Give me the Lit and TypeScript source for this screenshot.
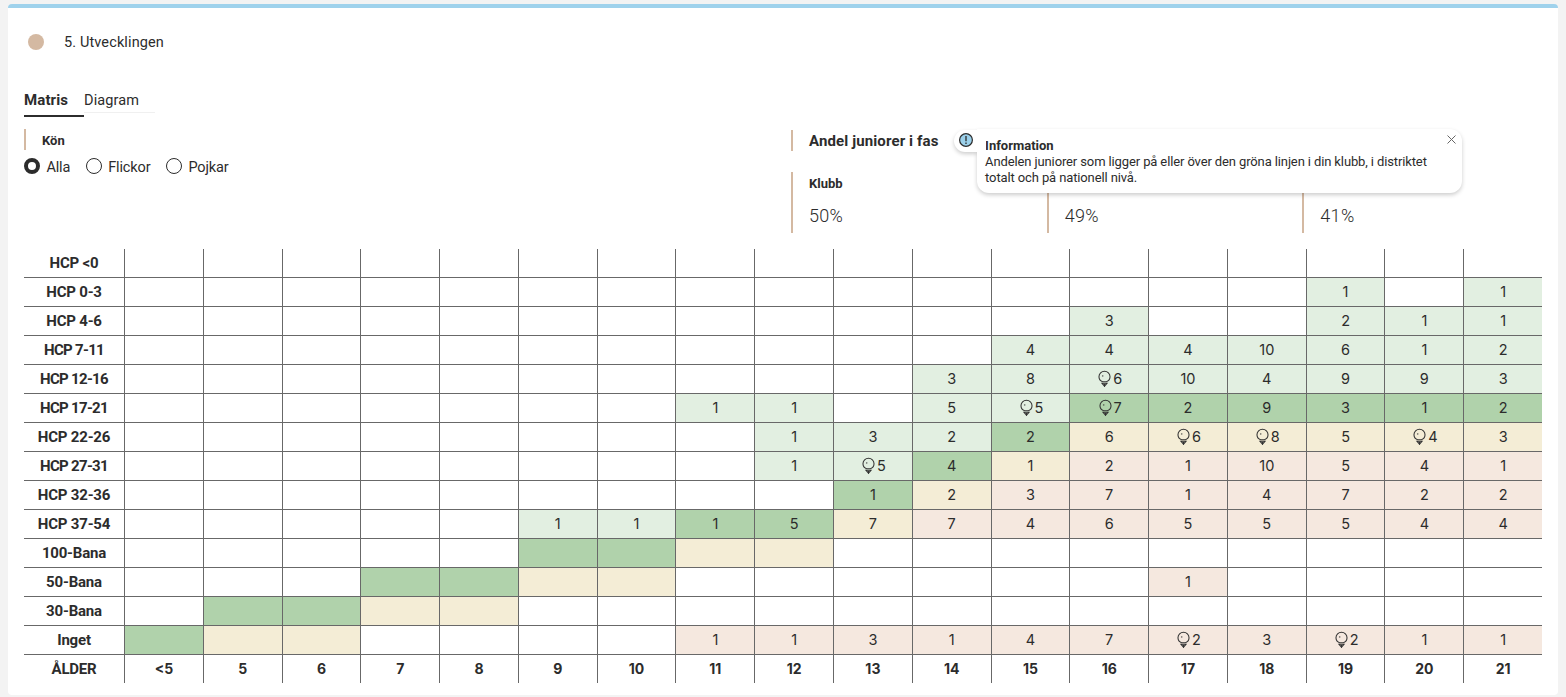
import { LitElement, html, svg, css, nothing } from 'lit';
import { customElement, property, state } from 'lit/decorators.js';
import { classMap } from 'lit/directives/class-map.js';

interface Cell {
  tone: string;
  value: string;
  bulb: boolean;
}

const AGES = ['<5', '5', '6', '7', '8', '9', '10', '11', '12', '13', '14', '15', '16', '17', '18', '19', '20', '21'];

const TONES: Record<string, string> = {
  l: 'above',
  g: 'line',
  y: 'near',
  r: 'below',
};

// label, index of the first filled age column, cells ("*" marks a light bulb)
const ROWS: [string, number, string][] = [
  ['HCP <0', 0, ''],
  ['HCP 0-3', 15, 'l1 . l1'],
  ['HCP 4-6', 12, 'l3 . . l2 l1 l1'],
  ['HCP 7-11', 11, 'l4 l4 l4 l10 l6 l1 l2'],
  ['HCP 12-16', 10, 'l3 l8 l6* l10 l4 l9 l9 l3'],
  ['HCP 17-21', 7, 'l1 l1 . l5 l5* g7* g2 g9 g3 g1 g2'],
  ['HCP 22-26', 8, 'l1 l3 l2 g2 y6 y6* y8* y5 y4* y3'],
  ['HCP 27-31', 8, 'l1 l5* g4 y1 r2 r1 r10 r5 r4 r1'],
  ['HCP 32-36', 9, 'g1 y2 r3 r7 r1 r4 r7 r2 r2'],
  ['HCP 37-54', 5, 'l1 l1 g1 g5 y7 r7 r4 r6 r5 r5 r5 r4 r4'],
  ['100-Bana', 5, 'g g y y'],
  ['50-Bana', 3, 'g g y y . . . . . . r1'],
  ['30-Bana', 1, 'g g y y'],
  ['Inget', 0, 'g y y . . . . r1 r1 r3 r1 r4 r7 r2* r3 r2* r1 r1'],
];

function parseRow(start: number, source: string): Cell[] {
  const tokens = source.split(' ');
  return AGES.map((_, i) => {
    const token = tokens[i - start] || '.';
    return {
      tone: TONES[token[0]] || '',
      value: token.slice(1).replace('*', ''),
      bulb: token.endsWith('*'),
    };
  });
}

@customElement('junior-matrix')
export class JuniorMatrix extends LitElement {
  static styles = css`
    :host {
      display: block;
    }
    .row {
      display: grid;
      grid-template-columns: 100px repeat(18, 1fr);
      height: 28px;
      border-bottom: 1px solid #686868;
    }
    .row.ages {
      border-bottom: none;
    }
    .label,
    .cell {
      display: flex;
      align-items: center;
      justify-content: center;
      box-sizing: border-box;
      min-width: 0;
      padding-bottom: 1px;
      white-space: nowrap;
    }
    .label {
      font-weight: 700;
      font-size: 15px;
      letter-spacing: -0.2px;
    }
    /* labels with a "1" in them set tighter */
    .label.tight {
      letter-spacing: -0.7px;
    }
    .cell {
      border-left: 1px solid #686868;
      font-family: Inter, sans-serif;
      font-size: 14.5px;
      font-weight: 400;
      gap: 2px;
      padding-bottom: 2px;
    }
    .cell.hint {
      padding-left: 2px;
    }
    .ages .cell {
      font-weight: 700;
      font-size: 14px;
    }
    .above {
      background: #e2efe1;
    }
    .line {
      background: #b0d2ab;
    }
    .near {
      background: #f4edd6;
    }
    .below {
      background: #f5e8df;
    }
    .bulb {
      width: 13px;
      height: 17px;
      flex: none;
    }
  `;

  renderBulb() {
    return svg`
      <svg class="bulb" viewBox="0 0 12 16" fill="none" stroke="#333" stroke-width="1">
        <path d="M4.2 11C2.1 10.3.8 8.6.8 6.4a5.2 5.2 0 0 1 10.4 0c0 2.2-1.3 3.9-3.4 4.6z" />
        <path d="M3.6 12.4h4.8L6 15.2z" />
        <path d="M6 13v2.8" />
        <path d="M3.6 5.6h1.4M4.3 4.9v1.4" stroke-width=".5" />
      </svg>
    `;
  }

  render() {
    return html`
      ${ROWS.map(
        ([label, start, source]) => html`
          <div class="row">
            <div class=${classMap({ label: true, tight: /^HCP.*(1\d|-\d1)/.test(label) })}>${label}</div>
            ${parseRow(start, source).map(
              (cell) => html`
                <div class="cell ${cell.tone} ${cell.bulb ? 'hint' : ''}">${cell.bulb ? this.renderBulb() : nothing}<span>${cell.value}</span></div>
              `
            )}
          </div>
        `
      )}
      <div class="row ages">
        <div class="label">ÅLDER</div>
        ${AGES.map((age) => html`<div class="cell">${age}</div>`)}
      </div>
    `;
  }
}

@customElement('info-popover')
export class InfoPopover extends LitElement {
  @property({ type: String }) heading = '';

  static styles = css`
    :host {
      position: relative;
      display: block;
      width: 23px;
      height: 22px;
    }
    .tab {
      display: flex;
      align-items: center;
      box-sizing: border-box;
      width: 23px;
      height: 22px;
      padding-left: 4px;
      padding-bottom: 2px;
      border-radius: 11px 0 0 11px;
      background: #fff;
      box-shadow: 0 2px 4px rgba(0, 0, 0, 0.2);
    }
    .panel {
      position: absolute;
      left: 23px;
      top: -1px;
      box-sizing: border-box;
      width: 485px;
      height: 64px;
      padding: 9px 30px 7px 8px;
      border-radius: 0 12px 12px 12px;
      background: #fff;
      box-shadow: 0 2px 4px rgba(0, 0, 0, 0.2);
      font-size: 13px;
      line-height: 16px;
    }
    .title {
      font-weight: 700;
    }
    .text {
      letter-spacing: -0.12px;
    }
    .mark,
    .close {
      display: block;
    }
    .close {
      position: absolute;
      right: 6px;
      top: 6px;
    }
    .joint {
      position: absolute;
      left: 16px;
      top: 0;
      width: 16px;
      height: 22px;
      background: #fff;
    }
    .mark {
      position: relative;
      z-index: 1;
    }
  `;

  render() {
    return html`
      <div class="tab">
        <svg class="mark" width="16" height="16" viewBox="0 0 16 16">
          <circle cx="8" cy="8" r="6.4" fill="#9bd0ea" stroke="#2c2c2c" stroke-width="1.2" />
          <path d="M8 4v5.2M8 10.6v1.4" stroke="#2c2c2c" stroke-width="1.3" />
        </svg>
      </div>
      <div class="panel">
        <div class="title">${this.heading}</div>
        <div class="text"><slot></slot></div>
        <svg class="close" width="9" height="9" viewBox="0 0 9 9" stroke="#666" stroke-width="1">
          <path d="M.5.5l8 8M8.5.5l-8 8" />
        </svg>
      </div>
      <div class="joint"></div>
    `;
  }
}

@customElement('app-root')
export class AppRoot extends LitElement {
  @state() private gender = 'Alla';
  @state() private tab = 'Matris';

  static styles = css`
    :host {
      display: block;
      box-sizing: border-box;
      height: 697px;
      padding: 4px 8px 2px;
      overflow: hidden;
      background: #f3f3f3;
      color: #2c2c2c;
      font-family: Roboto, sans-serif;
      font-size: 14.5px;
    }
    .card {
      box-sizing: border-box;
      height: 691px;
      padding: 0 16px;
      border-top: 4px solid #9fd2ec;
      border-radius: 4px;
      background: #fff;
    }
    .phase {
      display: flex;
      align-items: center;
      gap: 20px;
      height: 68px;
      padding-left: 4px;
      letter-spacing: 0.12px;
    }
    .dot {
      width: 16px;
      height: 16px;
      border-radius: 50%;
      background: #d4b9a2;
    }
    .tabs {
      display: flex;
      align-items: flex-start;
      padding-top: 12px;
      height: 41px;
    }
    .tab {
      box-sizing: border-box;
      height: 25px;
      width: 71px;
      line-height: 25px;
      border-bottom: 1px solid #f0f0f0;
      letter-spacing: 0.12px;
      cursor: pointer;
    }
    .tab.active {
      width: 60px;
      height: 29px;
      border-bottom: 2px solid #2c2c2c;
      font-size: 15px;
      font-weight: 700;
    }
    .top {
      display: grid;
      grid-template-columns: 1fr 1fr;
      height: 120px;
      margin-right: -16px;
    }
    .bar {
      border-left: 2px solid #d4b9a2;
      padding-left: 16px;
      font-weight: 700;
    }
    .gender {
      height: 21px;
      line-height: 23px;
      font-size: 13px;
    }
    .radios {
      display: flex;
      gap: 15.6px;
      margin-top: 8px;
      letter-spacing: -0.14px;
    }
    .radio {
      display: flex;
      align-items: flex-start;
      gap: 6.4px;
      line-height: 19px;
    }
    .ring {
      box-sizing: border-box;
      width: 16px;
      height: 16px;
      border: 1px solid #2c2c2c;
      border-radius: 50%;
    }
    .ring.checked {
      border-width: 4.5px;
    }
    .share {
      display: flex;
      align-items: center;
      height: 21px;
      margin-top: 1px;
      font-size: 15px;
      letter-spacing: 0.12px;
    }
    .share info-popover {
      margin-left: 15.6px;
      font-weight: 400;
      letter-spacing: 0;
    }
    .stats {
      display: grid;
      grid-template-columns: repeat(3, 1fr);
      margin-top: 21px;
    }
    .stat {
      height: 61px;
    }
    .name {
      height: 22px;
      line-height: 23px;
      font-size: 13px;
    }
    .percent {
      margin-top: 11px;
      line-height: 21px;
      font-size: 18px;
      font-weight: 300;
      letter-spacing: 0.3px;
    }
  `;

  renderTab(name: string) {
    return html`
      <div class=${classMap({ tab: true, active: this.tab === name })} @click=${() => (this.tab = name)}>${name}</div>
    `;
  }

  renderRadio(name: string) {
    return html`
      <label class="radio" @click=${() => (this.gender = name)}>
        <span class=${classMap({ ring: true, checked: this.gender === name })}></span>
        <span>${name}</span>
      </label>
    `;
  }

  render() {
    return html`
      <div class="card">
        <div class="phase">
          <span class="dot"></span>
          <span>5. Utvecklingen</span>
        </div>
        <div class="tabs">${['Matris', 'Diagram'].map((name) => this.renderTab(name))}</div>
        <div class="top">
          <div>
            <div class="bar gender">Kön</div>
            <div class="radios">${['Alla', 'Flickor', 'Pojkar'].map((name) => this.renderRadio(name))}</div>
          </div>
          <div>
            <div class="bar share">
              <span>Andel juniorer i fas</span>
              <info-popover heading="Information">Andelen juniorer som ligger på eller över den gröna linjen i din klubb, i distriktet totalt och på nationell nivå.</info-popover>
            </div>
            <div class="stats">
              <div class="bar stat">
                <div class="name">Klubb</div>
                <div class="percent">50%</div>
              </div>
              <div class="bar stat">
                <div class="name"></div>
                <div class="percent">49%</div>
              </div>
              <div class="bar stat">
                <div class="name"></div>
                <div class="percent">41%</div>
              </div>
            </div>
          </div>
        </div>
        <junior-matrix></junior-matrix>
      </div>
    `;
  }
}
